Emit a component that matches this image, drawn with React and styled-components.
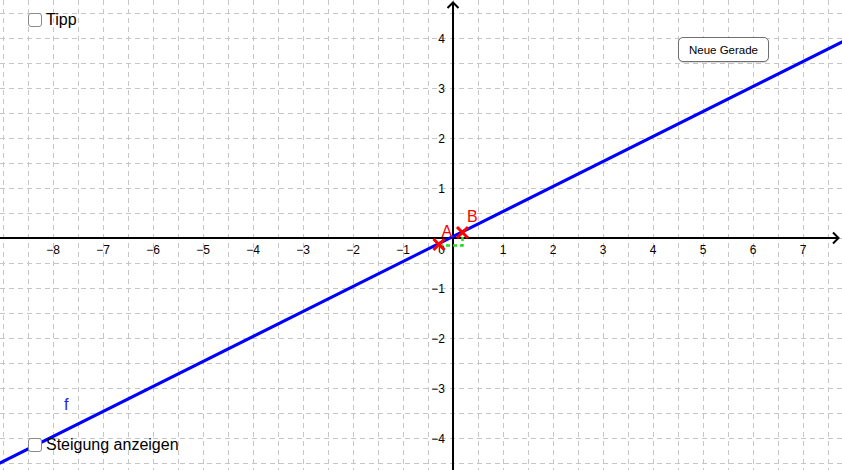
import React from 'react';
import styled, { createGlobalStyle } from 'styled-components';

const GlobalStyle = createGlobalStyle`
  html, body {
    margin: 0;
    padding: 0;
    background: #fff;
  }
  body {
    font-family: 'Liberation Sans', Arial, sans-serif;
  }
`;

// graph geometry: origin in px, 50px per unit, grid every half unit
const OX = 453;
const OY = 238;
const UNIT = 50;
const W = 842;
const H = 470;

const px = (u) => OX + u * UNIT;
const py = (v) => OY - v * UNIT;

const Applet = styled.div`
  position: relative;
  width: ${W}px;
  height: ${H}px;
  overflow: hidden;
  background: #fff;
`;

const Graph = styled.svg`
  display: block;
  width: ${W}px;
  height: ${H}px;
`;

const GridLine = styled.line`
  stroke: #c6c6c6;
  stroke-width: 1;
  stroke-dasharray: 5 4;
  shape-rendering: crispEdges;
`;

const Axis = styled.line`
  stroke: #000;
  stroke-width: 2;
`;

const Arrow = styled.polyline`
  fill: none;
  stroke: #000;
  stroke-width: 2;
  stroke-linejoin: miter;
`;

const TickLabel = styled.text`
  font-family: 'Liberation Sans', Arial, sans-serif;
  font-size: 12px;
  fill: #000;
`;

const Line = styled.line`
  stroke: #0000ff;
  stroke-width: 3;
`;

const SlopePath = styled.polyline`
  fill: none;
  stroke: #22dd22;
  stroke-width: 2.5;
  stroke-dasharray: 4 3;
`;

const CrossStroke = styled.path`
  stroke: #ff0000;
  stroke-width: 3;
  fill: none;
`;

const PointLabel = styled.text`
  font-family: 'Liberation Sans', Arial, sans-serif;
  font-size: 16px;
  fill: ${(p) => p.$color || '#ff0000'};
`;

const CheckRow = styled.label`
  position: absolute;
  left: 28px;
  top: ${(p) => p.$top}px;
  display: flex;
  align-items: center;
  gap: 4px;
  font-size: 16px;
  color: #000;
  line-height: 16px;
`;

const Box = styled.span`
  box-sizing: border-box;
  width: 14px;
  height: 14px;
  border: 1.5px solid #8a8a8a;
  border-radius: 3px;
  background: #fff;
`;

const Button = styled.button`
  position: absolute;
  left: 678px;
  top: 37px;
  box-sizing: border-box;
  width: 91px;
  height: 25px;
  padding: 0;
  border: 1.5px solid #6f6f6f;
  border-radius: 5px;
  background: #fff;
  font-family: 'Liberation Sans', Arial, sans-serif;
  font-size: 11.5px;
  color: #000;
  box-shadow: 0 1px 1px rgba(0, 0, 0, 0.15);
`;

function Cross({ x, y }) {
  const s = 5.5;
  return <CrossStroke d={`M${x - s} ${y - s}L${x + s} ${y + s}M${x - s} ${y + s}L${x + s} ${y - s}`} />;
}

export default function App() {
  const vx = [];
  for (let x = OX % 25; x < W; x += 25) vx.push(x + 0.5);
  const hy = [];
  for (let y = OY % 25; y < H; y += 25) hy.push(y + 0.5);

  const xTicks = [-8, -7, -6, -5, -4, -3, -2, -1, 1, 2, 3, 4, 5, 6, 7];
  const yTicks = [4, 3, 2, 1, -1, -2, -3, -4];
  const fmt = (n) => (n < 0 ? `\u2212${-n}` : `${n}`);

  // f: y = 0.5x + 0.03
  const f = (u) => 0.5 * u + 0.03;
  const A = { x: 439, y: 244.5 };
  const B = { x: 462.5, y: 232.5 };

  return (
    <>
      <GlobalStyle />
      <Applet>
        <Graph viewBox={`0 0 ${W} ${H}`}>
          {vx.map((x) => (
            <GridLine key={`v${x}`} x1={x} y1={0} x2={x} y2={H} />
          ))}
          {hy.map((y) => (
            <GridLine key={`h${y}`} x1={0} y1={y} x2={W} y2={y} />
          ))}

          <Axis x1={0} y1={OY} x2={838} y2={OY} />
          <Axis x1={OX} y1={H} x2={OX} y2={3} />
          <Arrow points={`833,232.5 838.5,238 833,243.5`} />
          <Arrow points={`447.5,8 453,2.5 458.5,8`} />

          {xTicks.map((t) => (
            <TickLabel key={`x${t}`} x={px(t)} y={254} textAnchor="middle">
              {fmt(t)}
            </TickLabel>
          ))}
          <TickLabel x={445} y={254} textAnchor="end">0</TickLabel>
          {yTicks.map((t) => (
            <TickLabel key={`y${t}`} x={445} y={py(t) + 4.5} textAnchor="end">
              {fmt(t)}
            </TickLabel>
          ))}

          <SlopePath points={`${A.x},245.5 ${B.x},245.5 ${B.x},${B.y}`} />

          <Line x1={px(-9.2)} y1={py(f(-9.2))} x2={px(7.9)} y2={py(f(7.9))} />

          <Cross x={A.x} y={A.y} />
          <Cross x={B.x} y={B.y} />
          <PointLabel x={441.5} y={237}>A</PointLabel>
          <PointLabel x={467} y={222}>B</PointLabel>
          <PointLabel x={64} y={410} $color="#2222ee">f</PointLabel>
        </Graph>

        <CheckRow $top={12}>
          <Box />
          Tipp
        </CheckRow>
        <CheckRow $top={437}>
          <Box />
          Steigung anzeigen
        </CheckRow>
        <Button>Neue Gerade</Button>
      </Applet>
    </>
  );
}
